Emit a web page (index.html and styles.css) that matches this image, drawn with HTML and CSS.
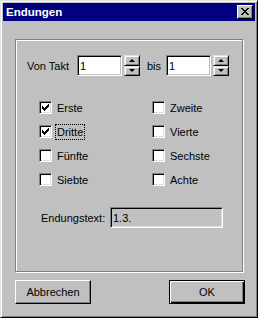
FILE: index.html
```html
<!DOCTYPE html>
<html lang="de">
<head>
    <meta charset="UTF-8">
    <title>Endungen</title>
    <link rel="stylesheet" href="styles.css">
</head>
<body>

    <div class="window">
        <div class="titlebar">
            <span class="title">Endungen</span>
            <span class="close-btn">
                <svg width="8" height="7" viewBox="0 0 8 7" shape-rendering="crispEdges">
                    <path d="M0 0h2v1h-2zM6 0h2v1h-2zM1 1h2v1h-2zM5 1h2v1h-2zM2 2h4v1h-4zM3 3h2v1h-2zM2 4h4v1h-4zM1 5h2v1h-2zM5 5h2v1h-2zM0 6h2v1h-2zM6 6h2v1h-2z" fill="#000"/>
                </svg>
            </span>
        </div>

        <div class="dialog-body">
            <div class="groupbox">
                <div class="takt-row">
                    <span class="takt-label">Von Takt</span>
                    <span class="field">1</span>
                    <span class="spinner">
                        <span class="spin-btn"><span class="arrow-up"></span></span>
                        <span class="spin-btn"><span class="arrow-down"></span></span>
                    </span>
                    <span class="bis-label">bis</span>
                    <span class="field">1</span>
                    <span class="spinner">
                        <span class="spin-btn"><span class="arrow-up"></span></span>
                        <span class="spin-btn"><span class="arrow-down"></span></span>
                    </span>
                </div>

                <div class="check-grid">
                    <div class="check-item"><span class="box checked"></span><span>Erste</span></div>
                    <div class="check-item"><span class="box"></span><span>Zweite</span></div>
                    <div class="check-item"><span class="box checked"></span><span class="focused">Dritte</span></div>
                    <div class="check-item"><span class="box"></span><span>Vierte</span></div>
                    <div class="check-item"><span class="box"></span><span>Fünfte</span></div>
                    <div class="check-item"><span class="box"></span><span>Sechste</span></div>
                    <div class="check-item"><span class="box"></span><span>Siebte</span></div>
                    <div class="check-item"><span class="box"></span><span>Achte</span></div>
                </div>

                <div class="ending-row">
                    <span class="ending-label">Endungstext:</span>
                    <span class="field readonly">1.3.</span>
                </div>
            </div>

            <div class="button-row">
                <span class="btn">Abbrechen</span>
                <span class="btn default">OK</span>
            </div>
        </div>
    </div>

</body>
</html>
```

FILE: styles.css
```css
body {
    margin: 0;
    background-color: #c0c0c0;
    font-family: "Liberation Sans", Arial, sans-serif;
    font-size: 11px;
    color: #000;
}
.window {
    width: 258px;
    height: 318px;
    box-sizing: border-box;
    background-color: #c0c0c0;
    border: 1px solid;
    border-color: #dfdfdf #000 #000 #dfdfdf;
    box-shadow: inset 1px 1px #fff, inset -1px -1px #808080;
    padding: 2px;
}
.titlebar {
    height: 18px;
    background-color: #000080;
    display: flex;
    align-items: center;
    justify-content: space-between;
    padding: 0 2px 0 3px;
}
.title {
    color: #fff;
    font-weight: bold;
    font-size: 11.5px;
}
.close-btn {
    width: 16px;
    height: 14px;
    box-sizing: border-box;
    background-color: #c0c0c0;
    border: 1px solid;
    border-color: #fff #000 #000 #fff;
    box-shadow: inset -1px -1px #808080;
    display: flex;
    align-items: center;
    justify-content: center;
    padding: 0 1px 1px 0;
}
.dialog-body {
    padding: 18px 0 0 12px;
}
.groupbox {
    width: 228px;
    height: 233px;
    box-sizing: border-box;
    border: 1px solid #808080;
    box-shadow: inset 1px 1px #fff, 1px 1px #fff;
}
.takt-row {
    display: flex;
    align-items: center;
    margin-top: 15px;
    padding-left: 11px;
    height: 21px;
}
.takt-label {
    width: 50px;
}
.bis-label {
    width: 19px;
    margin-left: 7px;
}
.field {
    width: 45px;
    height: 21px;
    box-sizing: border-box;
    background-color: #fff;
    border: 1px solid;
    border-color: #808080 #fff #fff #808080;
    box-shadow: inset 1px 1px #000, inset -1px -1px #c0c0c0;
    padding: 3px 0 0 2px;
    line-height: 14px;
}
.field.readonly {
    width: 113px;
    background-color: #c0c0c0;
    box-shadow: inset 1px 1px #000, inset -1px -1px #dfdfdf;
}
.spinner {
    display: flex;
    flex-direction: column;
    width: 16px;
    height: 21px;
    margin-left: 2px;
}
.spin-btn {
    flex: 1;
    box-sizing: border-box;
    background-color: #c0c0c0;
    border: 1px solid;
    border-color: #dfdfdf #000 #000 #dfdfdf;
    box-shadow: inset 1px 1px #fff, inset -1px -1px #808080;
    display: flex;
    align-items: center;
    justify-content: center;
}
.arrow-up {
    border-left: 3px solid transparent;
    border-right: 3px solid transparent;
    border-bottom: 3px solid #000;
}
.arrow-down {
    border-left: 3px solid transparent;
    border-right: 3px solid transparent;
    border-top: 3px solid #000;
}
.check-grid {
    display: grid;
    grid-template-columns: 113px 1fr;
    row-gap: 11px;
    margin-top: 25px;
    padding-left: 23px;
}
.check-item {
    display: flex;
    align-items: center;
    gap: 5px;
    height: 13px;
}
.box {
    width: 13px;
    height: 13px;
    box-sizing: border-box;
    background-color: #fff;
    border: 1px solid;
    border-color: #808080 #fff #fff #808080;
    box-shadow: inset 1px 1px #000, inset -1px -1px #dfdfdf;
    flex: none;
}
.box.checked {
    background: #fff url("data:image/svg+xml,%3Csvg xmlns='http://www.w3.org/2000/svg' width='7' height='7' shape-rendering='crispEdges'%3E%3Cpath d='M0 2h1v3h-1zM1 3h1v3h-1zM2 4h1v3h-1zM3 3h1v3h-1zM4 2h1v3h-1zM5 1h1v3h-1zM6 0h1v3h-1z'/%3E%3C/svg%3E") no-repeat 2px 2px;
}
.focused {
    outline: 1px dotted #000;
    outline-offset: 1px;
}
.ending-row {
    display: flex;
    align-items: center;
    margin-top: 21px;
    padding-left: 25px;
}
.ending-label {
    width: 69px;
}
.button-row {
    display: flex;
    justify-content: space-between;
    width: 230px;
    margin-top: 8px;
}
.btn {
    width: 76px;
    height: 24px;
    box-sizing: border-box;
    background-color: #c0c0c0;
    border: 1px solid;
    border-color: #fff #000 #000 #fff;
    box-shadow: inset -1px -1px #808080;
    display: flex;
    align-items: center;
    justify-content: center;
    padding-bottom: 1px;
}
.btn.default {
    border-color: #000;
    box-shadow: inset 1px 1px #fff, inset -1px -1px #000, inset -2px -2px #808080;
}
```
